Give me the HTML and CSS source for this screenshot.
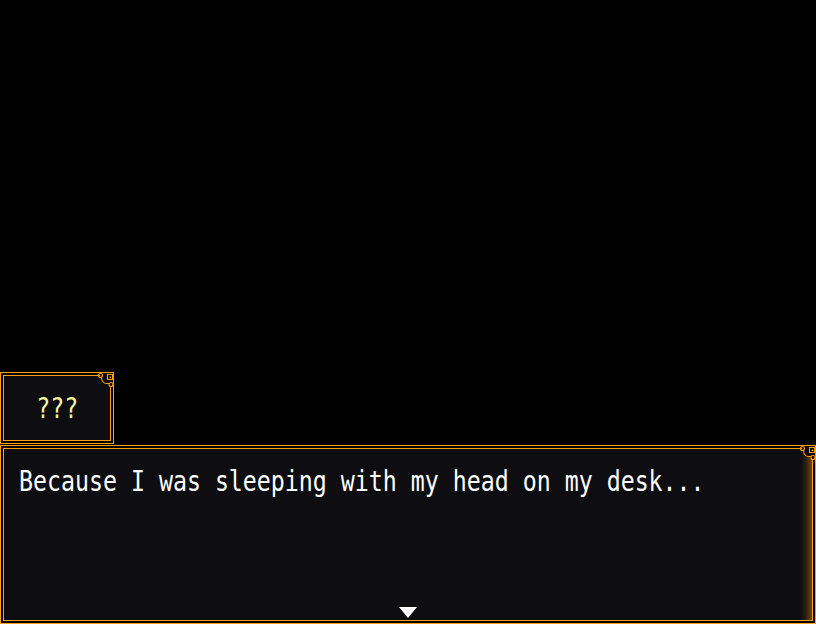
FILE: index.html
```html
<!DOCTYPE html>
<html>
<head>
<meta charset="utf-8">
<link rel="stylesheet" href="styles.css">
</head>
<body>
<div class="screen">
  <div class="frame namebox">
    <div class="inner name-inner"><span class="name">???</span></div>
    <svg class="orn" width="17" height="17" viewBox="0 0 17 17">
      <path d="M1 1 H16 V16 H14 C13 13 11 12 9 12 C6 12 4.5 10 4 6 C3.5 3 2 1 1 1 Z" fill="#000"/>
      <g fill="none" stroke="#ffa010" stroke-width="1.1">
        <circle cx="3.5" cy="3.5" r="2"/>
        <path d="M4.5 5.5 C4.8 10 6.5 11.5 9.5 11.5 H12"/>
        <rect x="10.5" y="2.5" width="5" height="5"/>
        <circle cx="14" cy="12.5" r="2"/>
      </g>
      <rect x="12.5" y="4.5" width="1.5" height="1.5" fill="#ffa010"/>
    </svg>
  </div>
  <div class="frame msgbox">
    <div class="inner msg-inner"><span class="msg">Because I was sleeping with my head on my desk...</span></div>
    <svg class="orn" width="17" height="17" viewBox="0 0 17 17">
      <path d="M1 1 H16 V16 H14 C13 13 11 12 9 12 C6 12 4.5 10 4 6 C3.5 3 2 1 1 1 Z" fill="#000"/>
      <g fill="none" stroke="#ffa010" stroke-width="1.1">
        <circle cx="3.5" cy="3.5" r="2"/>
        <path d="M4.5 5.5 C4.8 10 6.5 11.5 9.5 11.5 H12"/>
        <rect x="10.5" y="2.5" width="5" height="5"/>
        <circle cx="14" cy="12.5" r="2"/>
      </g>
      <rect x="12.5" y="4.5" width="1.5" height="1.5" fill="#ffa010"/>
    </svg>
    <div class="pause"></div>
  </div>
</div>
</body>
</html>
```
FILE: styles.css
```css
html, body {
  margin: 0;
  padding: 0;
  background: #000;
}
.screen {
  width: 816px;
  height: 624px;
  display: flex;
  flex-direction: column;
  justify-content: flex-end;
  align-items: flex-start;
}
.frame {
  position: relative;
  box-sizing: border-box;
  border: 1px solid #ffa010;
  padding: 2px;
  background: #000;
}
.inner {
  box-sizing: border-box;
  height: 100%;
  border: 1px solid #ffa010;
  background: #0e0e12;
}
.namebox {
  width: 114px;
  height: 72px;
  margin-bottom: 1px;
}
.name-inner {
  display: flex;
  align-items: center;
  justify-content: center;
  padding-top: 1px;
}
.name {
  display: inline-block;
  font-family: "DejaVu Sans Mono", monospace;
  font-size: 28px;
  line-height: 30px;
  color: #f8f4a0;
  transform: scaleX(0.83);
  transform-origin: center;
}
.msgbox {
  width: 816px;
  height: 179px;
}
.msg-inner {
  padding: 15px 0 0 15px;
  background: linear-gradient(to right, #0e0e12 0, #0e0e12 calc(100% - 11px), #2e200a calc(100% - 6px), #6a4812 100%);
}
.msg {
  display: inline-block;
  white-space: nowrap;
  font-family: "DejaVu Sans Mono", monospace;
  font-size: 28px;
  line-height: 36px;
  color: #fff;
  transform: scaleX(0.83);
  transform-origin: left center;
}
.orn {
  position: absolute;
  top: -1px;
  right: -1px;
  display: block;
}
.pause {
  position: absolute;
  left: 398px;
  bottom: 5px;
  width: 0;
  height: 0;
  border-left: 9px solid transparent;
  border-right: 9px solid transparent;
  border-top: 11px solid #fff;
}
```
